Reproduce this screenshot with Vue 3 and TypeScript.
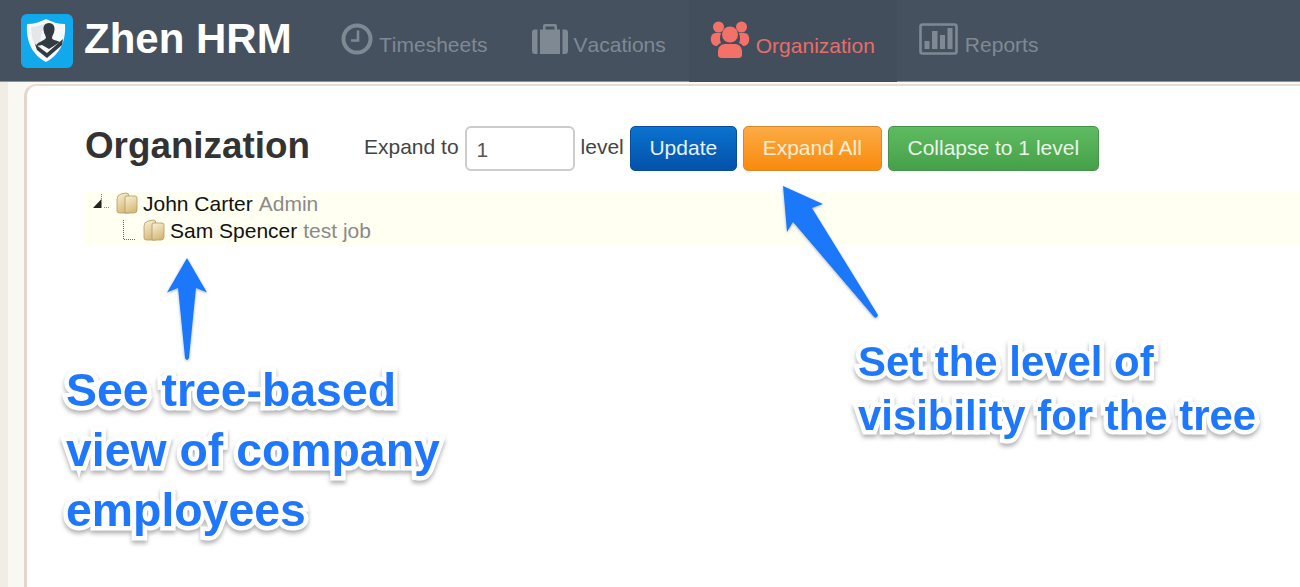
<script setup lang="ts">
interface NavItem {
  label: string;
  icon: string;
  active?: boolean;
}

const navItems: NavItem[] = [
  { label: "Timesheets", icon: "clock" },
  { label: "Vacations", icon: "case" },
  { label: "Organization", icon: "people", active: true },
  { label: "Reports", icon: "chart" },
];

const employees = [
  { name: "John Carter", job: "Admin", child: false },
  { name: "Sam Spencer", job: "test job", child: true },
];
</script>

<template>
  <div class="page">
    <header class="topbar">
      <div class="brand">
        <svg class="logo" width="52" height="54" viewBox="0 0 52 54">
          <rect width="52" height="54" rx="6" fill="#12a9ec" />
          <path d="M25 5 C31 8 37 10 44 10 C45 26 40 40 25 48 C10 40 5 26 6 10 C13 10 19 8 25 5Z" fill="#f7f8f8" />
          <path d="M25 9 C20 11 15 13 10 13 C10 26 15 37 25 44 C18 34 17 22 25 9Z" fill="#e3e7e9" />
          <path d="M28 9 C32 9 34 12 33.500 16 C33 20 31 22 31 24 C31 26 36 26.500 39 28 L28 35 L21 31 L15 32 C16 28 23 27 25 24 C25 22 23 20 22.500 16 C22 12 24 9 28 9Z" fill="#333b42" />
          <path d="M14 30 L26 39 L42 25 L41 31 L26 44 L16 36Z" fill="#333b42" />
        </svg>
        <span class="brand-name">Zhen HRM</span>
      </div>
      <nav class="nav">
        <a v-for="item in navItems" :key="item.label" class="nav-item" :class="[item.icon, { active: item.active }]">
          <svg v-if="item.icon === 'clock'" width="32" height="32" viewBox="0 0 32 32">
            <circle cx="16" cy="16" r="13.500" fill="none" stroke="currentColor" stroke-width="4" />
            <path d="M17 7.500 V17.500 H10" fill="none" stroke="currentColor" stroke-width="2.600" />
          </svg>
          <svg v-else-if="item.icon === 'case'" width="36" height="32" viewBox="0 0 36 32">
            <path d="M11 7 V3 Q11 1 13 1 H23 Q25 1 25 3 V7 H22.500 V3.500 H13.500 V7Z" fill="currentColor" />
            <path d="M8 6.500 H28 V31 H8Z" fill="currentColor" />
            <path d="M5.500 6.500 V31 H3 Q0 31 0 28 V9.500 Q0 6.500 3 6.500Z M30.500 6.500 V31 H33 Q36 31 36 28 V9.500 Q36 6.500 33 6.500Z" fill="currentColor" />
          </svg>
          <svg v-else-if="item.icon === 'people'" width="40" height="38" viewBox="0 0 40 38">
            <circle cx="8.500" cy="6" r="5.500" fill="currentColor" />
            <circle cx="31.500" cy="6" r="5.500" fill="currentColor" />
            <path d="M1 20 Q0 12 6 12 H11 Q9 18 11 22 Q8 23 7 25 Q2 25 1 20Z M39 20 Q40 12 34 12 H29 Q31 18 29 22 Q32 23 33 25 Q38 25 39 20Z" fill="currentColor" />
            <circle cx="20" cy="13.500" r="8" fill="currentColor" />
            <path d="M8 31 C8 26 11 23 15 23 H25 C29 23 32 26 32 31 V34 Q32 37 28 37 H12 Q8 37 8 34Z" fill="currentColor" />
          </svg>
          <svg v-else width="39" height="32" viewBox="0 0 39 32">
            <rect x="1.500" y="1.500" width="36" height="29" rx="2" fill="none" stroke="currentColor" stroke-width="2.600" />
            <path d="M5.500 18 H10.500 V26 H5.500Z M13 8 H18.500 V26 H13Z M21 12 H26 V26 H21Z M28.500 5 H33.500 V26 H28.500Z" fill="currentColor" />
          </svg>
          <span>{{ item.label }}</span>
        </a>
      </nav>
    </header>

    <div class="content-wrap">
      <aside class="rail"></aside>
      <main class="card">
        <div class="toolbar">
          <h1>Organization</h1>
          <div class="controls">
            <label for="level">Expand to</label>
            <input id="level" value="1" />
            <span class="level-word">level</span>
            <button class="btn blue">Update</button>
            <button class="btn orange">Expand All</button>
            <button class="btn green">Collapse to 1 level</button>
          </div>
        </div>
        <ul class="tree">
          <li v-for="emp in employees" :key="emp.name" :class="{ child: emp.child }">
            <svg v-if="!emp.child" class="branch" width="18" height="27" viewBox="0 0 18 27">
              <path d="M10.500 3 V9" stroke="#777" stroke-width="1" stroke-dasharray="1 1" fill="none" />
              <path d="M10.500 8 L10.500 17 L2 17 Z" fill="#222" />
              <path d="M13 16.500 H18" stroke="#888" stroke-width="1" stroke-dasharray="1 1" fill="none" />
            </svg>
            <svg v-else class="branch" width="18" height="27" viewBox="0 0 18 27">
              <path d="M5.500 2 V21.500 H17" stroke="#666" stroke-width="1" stroke-dasharray="1 1" fill="none" />
            </svg>
            <svg class="folder" width="22" height="22" viewBox="0 0 22 22">
              <defs>
                <linearGradient :id="'fold' + emp.name[0]" x1="0" y1="0" x2="0.400" y2="1">
                  <stop offset="0" stop-color="#faf2d6" />
                  <stop offset="1" stop-color="#d8bb7c" />
                </linearGradient>
              </defs>
              <path d="M1 19 L1 7 Q1 3 5 2 L10 1 Q13 1 13 4 L13 21 L4 21 Q1 21 1 19Z" :fill="`url(#fold${emp.name[0]})`" stroke="#b09a68" stroke-width="0.800" />
              <path d="M9 6 Q9 4 11 4 H19 Q21 4 21 6 V18 Q21 21 18 21 H9Z" :fill="`url(#fold${emp.name[0]})`" stroke="#b09a68" stroke-width="0.800" />
            </svg>
            <span class="name">{{ emp.name }}</span>
            <span class="job">{{ emp.job }}</span>
          </li>
        </ul>
      </main>
    </div>

    <!-- callouts drawn over the page -->
    <svg class="arrows" width="1300" height="587" viewBox="0 0 1300 587">
      <defs>
        <filter id="arrowShadow" x="-30%" y="-30%" width="160%" height="160%">
          <feDropShadow dx="0" dy="1" stdDeviation="1.500" flood-color="#000" flood-opacity="0.300" />
        </filter>
      </defs>
      <path d="M187 258 L207 292.500 L196 288 L189 358 Q187 362 185 358 L178 288 L167 292.500 Z" fill="#1f78fb" filter="url(#arrowShadow)" />
      <path d="M783 186 L823 204 L812 208 L878 315 Q877 319 874 317 L793 222 L787 232 Z" fill="#1f78fb" filter="url(#arrowShadow)" />
    </svg>
    <p class="callout left">See tree-based<br />view of company<br />employees</p>
    <p class="callout right">Set the level of<br />visibility for the tree</p>
  </div>
</template>

<style>
html,
body {
  margin: 0;
  background: #fff;
  overflow: hidden;
}
</style>

<style scoped>
.page {
  position: relative;
  width: 1300px;
  height: 587px;
  overflow: hidden;
  font-family: "Liberation Sans", Arial, sans-serif;
  display: flex;
  flex-direction: column;
}

.topbar {
  height: 81px;
  flex: none;
  display: flex;
  background: #46515f;
  border-bottom: 1px solid #8b9199;
}

.brand {
  display: flex;
  align-items: center;
  gap: 11px;
  padding-left: 21px;
  width: 320px;
  box-sizing: border-box;
}

.logo {
  flex: none;
}

.brand-name {
  font-size: 42px;
  font-weight: 700;
  color: #fff;
  white-space: nowrap;
  margin-top: -4px;
}

.nav {
  display: flex;
  align-items: stretch;
  font-kerning: none;
}

.nav-item {
  display: flex;
  align-items: center;
  gap: 6px;
  font-size: 21px;
  color: #7f8994;
  white-space: nowrap;
}

.nav-item svg {
  margin-top: -4px;
}

.nav-item span {
  margin-top: 9px;
}

.nav-item.clock {
  padding: 0 44px 0 21px;
}

.nav-item.case {
  padding: 0 23px 0 0;
}

.nav-item.people {
  gap: 6px;
  padding: 0 22px 0 21px;
  height: 83px;
  color: #e46f6b;
  background: #434e5c;
}

.nav-item.people svg {
  color: #f4716a;
}

.nav-item.chart {
  gap: 7px;
  padding: 0 0 0 22px;
}

.content-wrap {
  flex: 1;
  display: flex;
  padding-top: 2px;
  min-height: 0;
  background: linear-gradient(90deg, #f1ede6 8px, #faf8f3 8px);
}

.rail {
  width: 24px;
  flex: none;
}

.card {
  flex: 1;
  background: #fff;
  border-top: 2px solid #ebdcd3;
  border-left: 3px solid #e6d5cd;
  border-top-left-radius: 12px;
  padding: 40px 0 0 58px;
}

.toolbar {
  display: flex;
  align-items: center;
  height: 45px;
}

h1 {
  margin: 0;
  padding-bottom: 6px;
  width: 279px;
  flex: none;
  font-size: 36.8px;
  font-weight: 700;
  color: #333;
  white-space: nowrap;
}

.controls {
  display: flex;
  align-items: center;
  font-size: 21px;
  color: #444;
}

.controls label,
.level-word {
  padding-bottom: 3px;
}

.controls input {
  width: 110px;
  height: 45px;
  box-sizing: border-box;
  margin: 0 6px;
  padding: 2px 10px 0;
  font: inherit;
  color: #555;
  border: 2px solid #ccc;
  border-radius: 6px;
}

.level-word {
  margin-right: 6px;
}

.btn {
  height: 45px;
  margin-right: 6px;
  padding: 0 0 2px;
  font-family: inherit;
  font-size: 21px;
  color: #fff;
  border-radius: 5px;
  border: 1px solid;
}

.btn.blue {
  width: 107px;
  color: #e6f2ff;
  border-color: #0a4d9e;
  background: linear-gradient(#0a73d0, #0451a8);
}

.btn.orange {
  width: 139px;
  color: #fdeed6;
  border-color: #d9882c;
  background: linear-gradient(#fcab45, #f98a0c);
}

.btn.green {
  width: 211px;
  color: #e9f5e6;
  border-color: #46934a;
  background: linear-gradient(#5fbb62, #46a049);
}

.tree {
  list-style: none;
  margin: 20px 0 0 -1px;
  padding: 0;
  background: #fffff2;
  font-size: 21px;
}

.tree li {
  display: flex;
  align-items: center;
  height: 27px;
  padding-left: 7px;
  white-space: nowrap;
}

.tree li.child {
  padding-left: 34px;
}

.branch {
  flex: none;
}

.folder {
  flex: none;
  margin: -3px 5px 0 7px;
}

.name,
.job {
  padding-bottom: 2px;
}

.name {
  color: #111;
}

.job {
  margin-left: 6px;
  color: #8a8a8a;
}

.arrows {
  position: absolute;
  left: 0;
  top: 0;
  pointer-events: none;
}

.callout {
  position: absolute;
  margin: 0;
  font-weight: 700;
  color: #1f78fb;
  white-space: nowrap;
  -webkit-text-stroke: 9px #fff;
  paint-order: stroke fill;
  filter: drop-shadow(0 3px 2px rgba(0, 0, 0, 0.3));
}

.callout.left {
  left: 66px;
  top: 360px;
  font-size: 46.4px;
  line-height: 60px;
}

.callout.right {
  left: 858px;
  top: 335px;
  font-size: 41.9px;
  line-height: 54px;
}
</style>
